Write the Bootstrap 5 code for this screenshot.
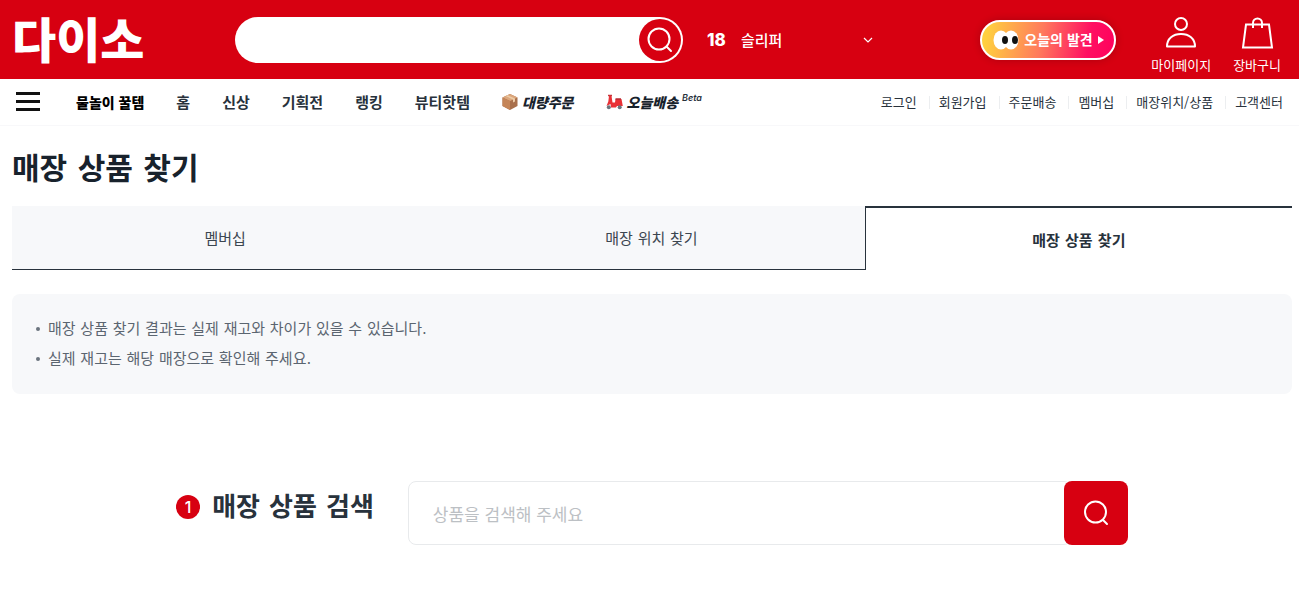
<!DOCTYPE html>
<html lang="ko">
<head>
<meta charset="utf-8">
<meta name="viewport" content="width=device-width, initial-scale=1">
<title>매장 상품 찾기 - 다이소</title>
<link href="https://cdn.jsdelivr.net/npm/bootstrap@5.3.0/dist/css/bootstrap.min.css" rel="stylesheet">
<style>
:root{--brand:#d70011;--ink:#28323c;--soft:#f7f8fa}
body{font-family:"Noto Sans CJK KR",sans-serif;color:var(--ink);background:#fff;font-size:15px;line-height:24px}
a{color:inherit;text-decoration:none}
svg{display:block;flex:none}
.wide-space{font-family:"DejaVu Sans","Noto Sans CJK KR",sans-serif}
.topbar{background:var(--brand);height:79px;color:#fff;padding:0 18px 0 12px}
.brand-name{font-size:48px;font-weight:900;line-height:56px;width:223px;padding-bottom:6px}
.search-pill{width:448px;height:46px;background:#fff;border-radius:23px;padding:2px}
.search-pill input{border:0;background:transparent;outline:0;min-width:0;padding-left:22px}
.round-btn{width:42px;height:42px;border:0;border-radius:50%;background:var(--brand);color:#fff;padding:0}
.trend{width:167px;margin-left:24px}
.trend a{font-weight:500}
.trend b{font-family:Inter,sans-serif;font-size:17px;font-weight:800;width:34px}
.trend button{border:0;background:none;color:#fff;padding:0}
.discover{height:40px;width:136px;border:2px solid #fff;border-radius:20px;background:linear-gradient(100deg,#ffcf3f 5%,#ff7a5c 45%,#ff0f62 80%,#ff005c);font-size:14px;font-weight:700;padding:0 11px;gap:5px;box-shadow:0 0 8px rgba(0,0,0,.2);margin-right:13px}
.discover span{padding-bottom:2px}
.tools{gap:22px}
.tool-link{font-size:13px;line-height:20px;gap:5px;padding-top:7px}
.menubar{height:47px;border-bottom:1px solid #f8f8fa;padding:0 16px}
.burger{border:0;background:none;padding:0;margin-right:36px;color:#111}
.main-menu{gap:32px;font-weight:700}
.main-menu .hot{font-size:14px;font-weight:900;color:#000}
.promo{font-size:14px;font-weight:900;font-style:italic;color:#18222c}
.promo sup{font:italic 600 9px/12px Inter,sans-serif;top:-7px;color:#28323c}
.utility{font-size:13px}
.utility li+li{margin-left:12px;padding-left:10px;position:relative}
.utility li+li::before{content:"";position:absolute;left:0;top:6px;height:13px;border-left:1px solid #eceef0}
main{padding:21px 7px 56px 12px}
h1{font-size:30px;font-weight:700;line-height:44px;color:#18222c;margin:0 0 15px}
.page-tabs .nav-link{height:64px;border-radius:0;color:#3c4650;background:var(--soft);border:0;border-bottom:1px solid var(--ink);padding:0;line-height:66px}
.page-tabs .nav-link.active{background:#fff;color:var(--ink);font-weight:700;border:0;border-top:2px solid var(--ink);border-left:1px solid var(--ink)}
.notice{background:var(--soft);border-radius:8px;margin-top:24px;padding:20px 24px;color:#5b6570;line-height:30px}
.notice li{display:flex;align-items:center;gap:8px}
.notice li::before{content:"";width:4px;height:4px;border-radius:50%;background:#6b747e}
.finder{margin-top:87px;gap:34px}
.finder h2{font-size:26px;font-weight:700;line-height:40px;margin:0 0 12px}
.step{width:24px;height:24px;border-radius:50%;background:var(--brand);color:#fff;font:500 16px/24px Inter,sans-serif}
.finder-box{width:720px}
.finder-box input{height:64px;border:1px solid #e8eaec;border-radius:8px;padding:0 24px;font-size:17px;margin-right:-8px;min-width:0}
.finder-box input::placeholder{color:#bcc0c4;opacity:1}
.finder-box button{width:64px;height:64px;border:0;border-radius:8px;background:var(--brand);color:#fff;flex:none;z-index:1}
</style>
</head>
<body>
<header>
 <div class="topbar d-flex align-items-center">
  <a class="brand-name flex-shrink-0" href="#">다이소</a>
  <form class="search-pill d-flex flex-shrink-1" role="search">
   <input class="flex-grow-1" type="search" aria-label="검색어">
   <button class="round-btn d-flex align-items-center justify-content-center flex-shrink-0" type="button" aria-label="검색">
    <svg width="26" height="26" viewBox="0 0 26 26" fill="none" stroke="currentColor" stroke-width="2"><circle cx="12" cy="12" r="10.500"/><path d="M19.500 19.500 24 24" stroke-linecap="round"/></svg>
   </button>
  </form>
  <div class="trend d-flex align-items-center flex-shrink-0">
   <b>18</b><a href="#">슬리퍼</a>
   <button class="ms-auto" type="button" aria-label="인기 검색어 펼치기"><svg width="12" height="8" viewBox="0 0 12 8" fill="none" stroke="currentColor" stroke-width="1.200"><path d="m2 2 4 4 4-4"/></svg></button>
  </div>
  <div class="tools d-flex align-items-center ms-auto">
   <a class="discover d-flex align-items-center text-nowrap" href="#">
    <svg width="26" height="20" viewBox="0 0 26 20"><ellipse cx="8" cy="10" rx="7.500" ry="9.500" fill="#fff"/><ellipse cx="18" cy="10" rx="7.500" ry="9.500" fill="#fff"/><ellipse cx="12" cy="10" rx="3" ry="4" fill="#111"/><ellipse cx="22" cy="10" rx="3" ry="4" fill="#111"/></svg>
    <span>오늘의 발견</span>
    <svg width="6" height="8" viewBox="0 0 6 8"><path d="M0 0 6 4 0 8z" fill="#fff"/></svg>
   </a>
   <a class="tool-link d-flex flex-column align-items-center text-nowrap" href="#">
    <svg width="34" height="38" viewBox="0 0 34 38" fill="none" stroke="currentColor" stroke-width="2"><circle cx="17" cy="12" r="6"/><path d="M3 34.500c0-8 6-12.500 14-12.500s14 4.500 14 12.500z" stroke-linejoin="round"/></svg>
    마이페이지
   </a>
   <a class="tool-link d-flex flex-column align-items-center text-nowrap" href="#">
    <svg width="34" height="38" viewBox="0 0 34 38" fill="none" stroke="currentColor" stroke-width="2"><path d="M6 12.500h23l3 23H3z"/><path d="M13 16v-5a4.500 4.500 0 0 1 9 0v5"/></svg>
    장바구니
   </a>
  </div>
 </div>
 <div class="menubar d-flex align-items-center text-nowrap">
  <button class="burger" type="button" aria-label="전체 메뉴"><svg width="24" height="20" viewBox="0 0 24 20" fill="currentColor"><path d="M0 0h24v3H0zM0 8h24v3H0zM0 16h24v3H0z"/></svg></button>
  <nav aria-label="주요 메뉴"><ul class="main-menu list-unstyled d-flex align-items-center mb-0">
   <li><a href="#" class="hot">물놀이 꿀템</a></li>
   <li><a href="#">홈</a></li>
   <li><a href="#">신상</a></li>
   <li><a href="#">기획전</a></li>
   <li><a href="#">랭킹</a></li>
   <li><a href="#">뷰티핫템</a></li>
   <li><a href="#" class="promo d-flex align-items-center gap-1">
    <svg width="16" height="16" viewBox="0 0 16 16"><path d="M8 0 15.500 3.500v8.500L8 16 .5 12V3.500z" fill="#a86f4b"/><path d="M8 0 15.500 3.500 8 7 .5 3.500z" fill="#dca77c"/><path d="M.5 3.500 8 7v9L.5 12z" fill="#c58558"/><path d="M3.500 2 11 5.500v3l2-1V4.600L5.500 1.200z" fill="#edcba6"/></svg>대량주문</a></li>
   <li><a href="#" class="promo d-flex align-items-center gap-1">
    <svg width="17" height="16" viewBox="0 0 17 16"><path d="M2 1.500h4" stroke="#c4383c" stroke-width="1.500"/><path d="M3 2h2.500l1 6.500H9l.5-3.500h6l1.300 7H11l-1 1.500H5L4.500 10 .5 12l1.800-4.500z" fill="#e93136"/><path d="M9.500 5h5.500" stroke="#b52a32" stroke-width="1.500"/><circle cx="2.800" cy="13.300" r="2" fill="#6a747c"/><circle cx="13.700" cy="13.300" r="2" fill="#6a747c"/></svg><span>오늘배송 <sup>Beta</sup></span></a></li>
  </ul></nav>
  <ul class="utility list-unstyled d-flex mb-0 ms-auto">
   <li><a href="#">로그인</a></li><li><a href="#">회원가입</a></li><li><a href="#">주문배송</a></li><li><a href="#">멤버십</a></li><li><a href="#">매장위치/상품</a></li><li><a href="#">고객센터</a></li>
  </ul>
 </div>
</header>
<main>
 <h1 class="wide-space">매장 상품 찾기</h1>
 <nav class="page-tabs nav nav-justified wide-space" aria-label="매장 안내">
  <a class="nav-link" href="#">멤버십</a>
  <a class="nav-link" href="#">매장 위치 찾기</a>
  <a class="nav-link active" aria-current="page" href="#">매장 상품 찾기</a>
 </nav>
 <ul class="notice list-unstyled mb-0 wide-space">
  <li>매장 상품 찾기 결과는 실제 재고와 차이가 있을 수 있습니다.</li>
  <li>실제 재고는 해당 매장으로 확인해 주세요.</li>
 </ul>
 <form class="finder d-flex align-items-center justify-content-center">
  <h2 class="d-flex align-items-center text-nowrap wide-space"><span class="step text-center me-2 flex-shrink-0">1</span><label for="product" class="ms-1">매장 상품 검색</label></h2>
  <div class="finder-box d-flex">
   <input id="product" class="flex-grow-1" type="text" placeholder="상품을 검색해 주세요">
   <button class="d-flex align-items-center justify-content-center" type="button" aria-label="상품 검색"><svg width="26" height="26" viewBox="0 0 26 26" fill="none" stroke="currentColor" stroke-width="2"><circle cx="12.500" cy="12" r="10.500"/><path d="m20 20 4 4" stroke-linecap="round"/></svg></button>
  </div>
 </form>
</main>
<script src="https://cdn.jsdelivr.net/npm/bootstrap@5.3.0/dist/js/bootstrap.bundle.min.js"></script>
</body>
</html>
